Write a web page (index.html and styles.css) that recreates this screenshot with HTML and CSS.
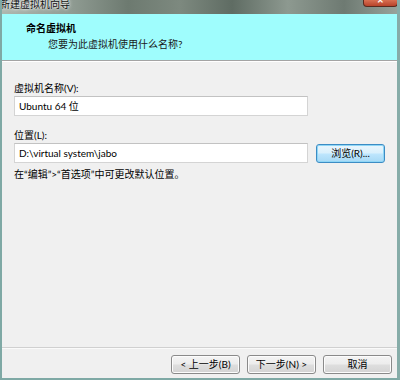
FILE: index.html
```html
<!DOCTYPE html>
<html lang="zh-CN">
<head>
    <meta charset="UTF-8">
    <title>新建虚拟机向导</title>
    <link rel="stylesheet" href="styles.css">
</head>
<body>
    <div class="window">
        <div class="titlebar">
            <span class="title">新建虚拟机向导</span>
            <span class="close">✕</span>
        </div>

        <div class="header">
            <div class="header-title">命名虚拟机</div>
            <div class="header-sub">您要为此虚拟机使用什么名称?</div>
        </div>

        <div class="content">
            <div class="label">虚拟机名称(V):</div>
            <div class="row">
                <div class="input">Ubuntu 64 位</div>
            </div>

            <div class="label second">位置(L):</div>
            <div class="row">
                <div class="input">D:\virtual system\jabo</div>
                <button class="btn focus">浏览(R)...</button>
            </div>

            <div class="hint">在“编辑”&gt;“首选项”中可更改默认位置。</div>
        </div>

        <div class="footer">
            <button class="btn">&lt; 上一步(B)</button>
            <button class="btn">下一步(N) &gt;</button>
            <button class="btn">取消</button>
        </div>
    </div>
</body>
</html>
```

FILE: styles.css
```css
html, body {
    margin: 0;
    padding: 0;
}
body {
    font-family: Lato, "Noto Sans CJK SC", sans-serif;
    font-size: 10px;
    color: #000;
    background: #6f8078;
}
.window {
    width: 400px;
    height: 380px;
    box-sizing: border-box;
    display: flex;
    flex-direction: column;
    border-left: 2px solid #7fa9a5;
    border-right: 3px solid #86aca8;
    border-bottom: 2px solid #7fa9a5;
    background: #f0f0f0;
    overflow: hidden;
}
.titlebar {
    height: 14px;
    margin: 0 -3px 0 -2px;
    display: flex;
    align-items: flex-start;
    background: linear-gradient(90deg, #aeb8b0 0%, #8f9b92 18%, #6d7a70 32%, #7d897f 45%, #5f6c63 58%, #8d9990 72%, #6e7a72 86%, #9aa59d 100%);
    overflow: hidden;
}
.title {
    font-size: 10px;
    line-height: 12px;
    margin-top: -2px;
    color: #111;
    text-shadow: 0 0 4px #fff, 0 0 2px #fff;
}
.close {
    margin-left: auto;
    margin-right: 2px;
    width: 35px;
    height: 7px;
    box-sizing: border-box;
    border: 1px solid #5a2a1e;
    border-top: none;
    border-radius: 0 0 4px 4px;
    background: linear-gradient(#d86f52, #b8432a);
    color: #fff;
    font-size: 8px;
    line-height: 0;
    text-align: center;
    font-weight: bold;
}
.header {
    height: 46px;
    background: #9ffdfd;
    border-bottom: 1px solid #a4a4a4;
    box-shadow: 0 1px 0 #fff;
}
.header-title {
    font-weight: bold;
    line-height: 12px;
    padding: 8px 0 0 24px;
}
.header-sub {
    line-height: 12px;
    padding: 4px 0 0 46px;
    color: #1a1a1a;
}
.content {
    flex: 1;
    padding: 20px 0 0 12px;
}
.label {
    line-height: 15px;
}
.label.second {
    margin-top: 12px;
}
.row {
    display: flex;
    align-items: center;
    gap: 8px;
}
.input {
    width: 294px;
    height: 20px;
    box-sizing: border-box;
    border: 1px solid #d4d4d4;
    border-top-color: #c2c2c2;
    background: #fff;
    padding: 0 4px;
    line-height: 18px;
    white-space: nowrap;
}
.hint {
    margin-top: 4px;
    line-height: 15px;
}
.btn {
    font-family: Lato, "Noto Sans CJK SC", sans-serif;
    font-size: 10px;
    width: 69px;
    height: 19px;
    padding: 0;
    box-sizing: border-box;
    border: 1px solid #8a8a8a;
    border-radius: 3px;
    color: #000;
    background: linear-gradient(#f4f4f4 0%, #ececec 48%, #dedede 52%, #d3d3d3 100%);
    box-shadow: inset 0 0 0 1px #fcfcfc;
    line-height: 15px;
}
.btn.focus {
    border-color: #3c8cc4;
    background: linear-gradient(#eaf6fd 0%, #d9f0fc 48%, #bee6fd 52%, #a7d9f5 100%);
    box-shadow: inset 0 0 0 1px #8fd6f6;
}
.footer {
    height: 31px;
    box-sizing: border-box;
    border-top: 1px solid #d0d0d0;
    box-shadow: inset 0 1px 0 #fafafa;
    padding: 7px 5px 0 0;
    display: flex;
    justify-content: flex-end;
    gap: 7px;
}
```
